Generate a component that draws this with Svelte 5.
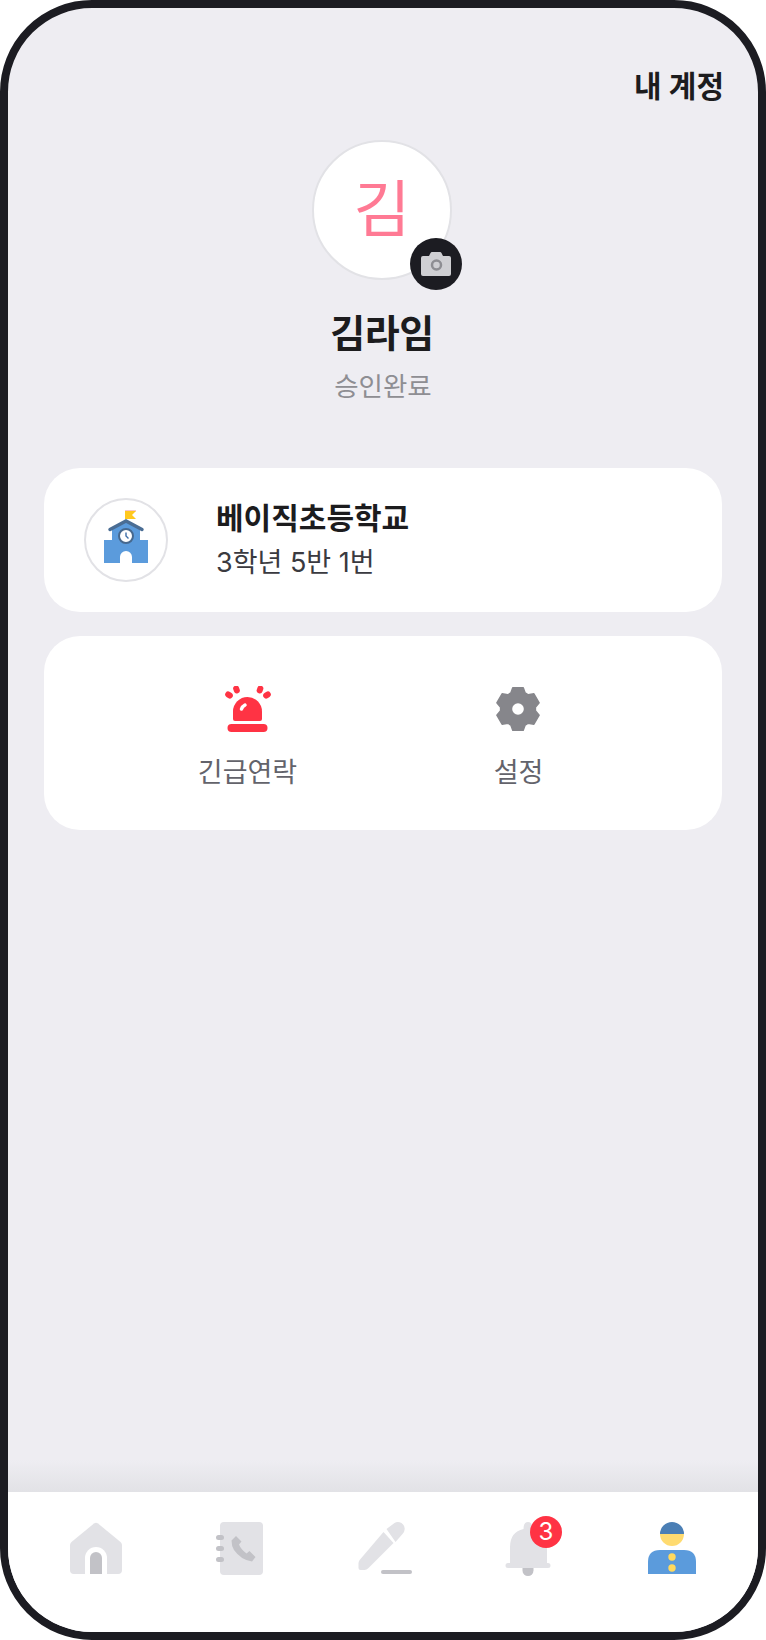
<script>
const tabs = ["home", "book", "pencil", "bell", "me"];

// six flat-topped teeth around the centre
function gearPath(cx, cy, outer, inner) {
  const pts = [];
  for (let i = 0; i < 6; i++) {
    const a = (i * 60 - 90) * (Math.PI / 180);
    for (const [d, r] of [[-0.42, inner], [-0.24, outer], [0.24, outer], [0.42, inner]]) {
      pts.push(`${(cx + r * Math.cos(a + d)).toFixed(2)} ${(cy + r * Math.sin(a + d)).toFixed(2)}`);
    }
  }
  return "M" + pts.join("L") + "z";
}
const gear = gearPath(22, 23, 22, 17.5);
</script>

<div class="phone">
  <main class="content">
    <h1 class="title">내 계정</h1>

    <section class="profile">
      <div class="avatar">
        <span class="initial">김</span>
        <button class="camera" aria-label="사진 변경">
          <svg width="30" height="24" viewBox="0 0 30 24">
            <path fill="#cfcfd3" d="M2 4h6l1.500-3q.5-1 1.500-1h8q1 0 1.500 1L22 4h6q2 0 2 2v16q0 2-2 2H2q-2 0-2-2V6q0-2 2-2z" />
            <circle cx="15.500" cy="13" r="4.500" fill="none" stroke="#8e8e93" stroke-width="2.500" />
          </svg>
        </button>
      </div>
      <div class="name">김라임</div>
      <div class="status">승인완료</div>
    </section>

    <section class="card school">
      <div class="school-logo">
        <svg width="46" height="54" viewBox="0 0 46 54">
          <path fill="#f9c5c8" d="M22 0h11v1.500H22z" />
          <path fill="#ffc81e" d="M22 1h11l-4 4 4 4H22z" />
          <path fill="#5b9bdc" d="M9 18L23 11l14 7v12h8v23H29v-6a6 6 0 0 0-12 0v6H1V30h8z" />
          <path fill="none" stroke="#4a6d94" stroke-width="3.500" stroke-linecap="round" d="M7 19.500L23 11l16 8.500" />
          <circle cx="23" cy="26" r="7" fill="#fff" stroke="#46688e" stroke-width="2" />
          <path fill="none" stroke="#3e6ea8" stroke-width="1.400" d="M23 22.500V26l2.500 2.500" />
        </svg>
      </div>
      <div class="school-info">
        <div class="school-name">베이직초등학교</div>
        <div class="school-class">3학년 5반 1번</div>
      </div>
    </section>

    <section class="card actions">
      <button class="action">
        <svg width="46" height="46" viewBox="0 0 46 46">
          <g fill="#ff3344">
            <path d="M8 33V25.500a14.500 14.500 0 0 1 29 0V33q0 2-2 2H10q-2 0-2-2z" />
            <rect x="2.500" y="38" width="40" height="8" rx="4" />
            <rect x="8.500" y="-.5" width="6" height="8" rx="3" transform="rotate(-20 11.500 3.500)" />
            <rect x="32" y="-.5" width="6" height="8" rx="3" transform="rotate(20 35 3.500)" />
            <rect x="1" y="5" width="6" height="8" rx="3" transform="rotate(-55 4 9)" />
            <rect x="39" y="5" width="6" height="8" rx="3" transform="rotate(55 42 9)" />
          </g>
          <path fill="none" stroke="#fff" stroke-width="3.500" stroke-linecap="round" d="M16.500 23q.8-2.500 3.500-4" />
        </svg>
        <span>긴급연락</span>
      </button>
      <button class="action">
        <svg width="46" height="46" viewBox="0 0 46 46">
          <path fill="#86868b" stroke="#86868b" stroke-width="1.500" stroke-linejoin="round" d={gear} />
          <circle cx="22" cy="23" r="5.800" fill="#fff" />
        </svg>
        <span>설정</span>
      </button>
    </section>
  </main>

  <nav class="tabbar">
    {#each tabs as tab}
      <button class="tab" aria-label={tab}>
        {#if tab === "home"}
          <svg width="56" height="56" viewBox="0 0 56 56">
            <path fill="#e2e2e6" d="M26 1.500q2-1.500 4 0L52.500 20q1.500 1.500 1.500 3v25q0 4-4 4H6q-4 0-4-4V23q0-1.500 1.500-3z" />
            <path fill="#fff" d="M17 52V36a11 11 0 0 1 22 0v16z" />
            <path fill="#c2c2c7" d="M22 52V36a6 6 0 0 1 12 0v16z" />
          </svg>
        {:else if tab === "book"}
          <svg width="56" height="56" viewBox="0 0 56 56">
            <rect x="8" y="0" width="43" height="53" rx="4" fill="#e2e2e6" />
            <g fill="#c2c2c7">
              <rect x="4" y="13" width="8" height="5" rx="2.500" />
              <rect x="4" y="24" width="8" height="5" rx="2.500" />
              <rect x="4" y="35" width="8" height="5" rx="2.500" />
              <path d="M24 14l5.500 5.500-2.500 3q2 5 7.500 9l3-2.500 6 6-3.500 4.500Q29 38 22 28q-2.500-4-2.500-9.500z" />
            </g>
          </svg>
        {:else if tab === "pencil"}
          <svg width="56" height="56" viewBox="0 0 56 56">
            <g fill="#e2e2e6" transform="translate(-1.500 0)">
              <path d="M29 10l10 11-25 25q-2 2-4 2H6q-2 0-2-2v-5q0-2 2-4z" />
              <path d="M32 7l8-6q3-2 7 0 4 3 3 7 0 2-2 4l-7 8z" />
            </g>
            <rect x="25" y="48" width="31" height="4" rx="2" fill="#c2c2c7" />
          </svg>
        {:else if tab === "bell"}
          <span class="bell">
            <svg width="56" height="56" viewBox="0 0 56 56">
              <path fill="#c2c2c7" d="M22.500 46h11v2.500a5.500 5.500 0 0 1-11 0z" />
              <path fill="#e2e2e6" d="M23.500 7q0-7 4.500-7t4.500 7q14.500 3 14.500 18v16h1a2.500 2.500 0 0 1 0 5H8a2.500 2.500 0 0 1 0-5h2V25Q10 10 23.500 7z" />
            </svg>
            <span class="badge">3</span>
          </span>
        {:else}
          <svg width="56" height="56" viewBox="0 0 56 56">
            <path fill="#4b7fb5" d="M16 12a12 12 0 0 1 24 0z" />
            <path fill="#ffdb70" d="M16 12h24a12 12 0 0 1-24 0z" />
            <path fill="#5b9bdc" d="M4 52V40q0-12 12-12h24q12 0 12 12v12z" />
            <circle cx="28" cy="35" r="3.700" fill="#ffd95e" />
            <circle cx="28" cy="46" r="3.700" fill="#ffd95e" />
          </svg>
        {/if}
      </button>
    {/each}
  </nav>
</div>

<style>
:global(body) {
  margin: 0;
  background: #fff;
}

.phone {
  box-sizing: border-box;
  width: 766px;
  height: 1640px;
  display: flex;
  flex-direction: column;
  border: 8px solid #1c1c22;
  border-radius: 92px;
  overflow: hidden;
  background: #eeedf2;
  color: #1c1c1e;
  font-family: Inter, "Noto Sans CJK KR", sans-serif;
}

button {
  border: 0;
  padding: 0;
  background: none;
  font: inherit;
  color: inherit;
}

.content {
  flex: 1;
  display: flex;
  flex-direction: column;
  padding: 0 36px;
  background: linear-gradient(to bottom, transparent calc(100% - 32px), #e2e2e6 100%);
}

.title {
  margin: 59px -2px 0 0;
  text-align: right;
  font-size: 30px;
  line-height: 38px;
  font-weight: 700;
}

.profile {
  display: flex;
  flex-direction: column;
  align-items: center;
  margin-top: 35px;
  padding-right: 2px;
}

.avatar {
  box-sizing: border-box;
  position: relative;
  width: 140px;
  height: 140px;
  display: flex;
  align-items: center;
  justify-content: center;
  background: #fff;
  border: 2px solid #e2e2e6;
  border-radius: 50%;
}

.initial {
  font-size: 62px;
  line-height: 1;
  color: #ff7a94;
}

.camera {
  position: absolute;
  right: -12px;
  bottom: -12px;
  width: 52px;
  height: 52px;
  display: flex;
  align-items: center;
  justify-content: center;
  background: #1c1c22;
  border-radius: 50%;
}

.name {
  margin-top: 28px;
  font-size: 38px;
  line-height: 50px;
  font-weight: 700;
  letter-spacing: -0.5px;
}

.status {
  margin-top: 10px;
  padding-left: 2px;
  font-size: 26.5px;
  line-height: 36px;
  color: #8e8e93;
}

.card {
  background: #fff;
  border-radius: 36px;
}

.school {
  display: flex;
  align-items: center;
  height: 144px;
  margin-top: 64px;
  padding-left: 40px;
}

.school-logo {
  box-sizing: border-box;
  width: 84px;
  height: 84px;
  display: flex;
  align-items: center;
  justify-content: center;
  padding-bottom: 6px;
  border: 2px solid #e2e2e6;
  border-radius: 50%;
}

.school-info {
  margin-left: 48px;
}

.school-name {
  margin-top: -1px;
  font-size: 30px;
  line-height: 40px;
  font-weight: 700;
}

.school-class {
  margin-top: 6px;
  font-size: 27px;
  line-height: 38px;
  color: #3a3a40;
}

.actions {
  display: grid;
  grid-template-columns: 271px 271px;
  justify-content: center;
  height: 194px;
  margin-top: 24px;
  padding-top: 50px;
  box-sizing: border-box;
}

.action {
  display: flex;
  flex-direction: column;
  align-items: center;
  align-self: start;
  gap: 23px;
  font-size: 27px;
  line-height: 36px;
  color: #63636b;
}

.tabbar {
  box-sizing: border-box;
  height: 140px;
  display: grid;
  grid-template-columns: repeat(5, 144px);
  justify-content: center;
  padding: 30px 0 0 2px;
  background: #fff;
}

.tab {
  height: 56px;
  display: flex;
  justify-content: center;
}

.bell {
  position: relative;
  display: block;
  width: 56px;
  height: 56px;
}

.badge {
  position: absolute;
  top: -6px;
  right: -6px;
  width: 32px;
  height: 32px;
  border-radius: 50%;
  background: #ff3344;
  color: #fff;
  font-size: 24px;
  line-height: 32px;
  text-align: center;
}
</style>
